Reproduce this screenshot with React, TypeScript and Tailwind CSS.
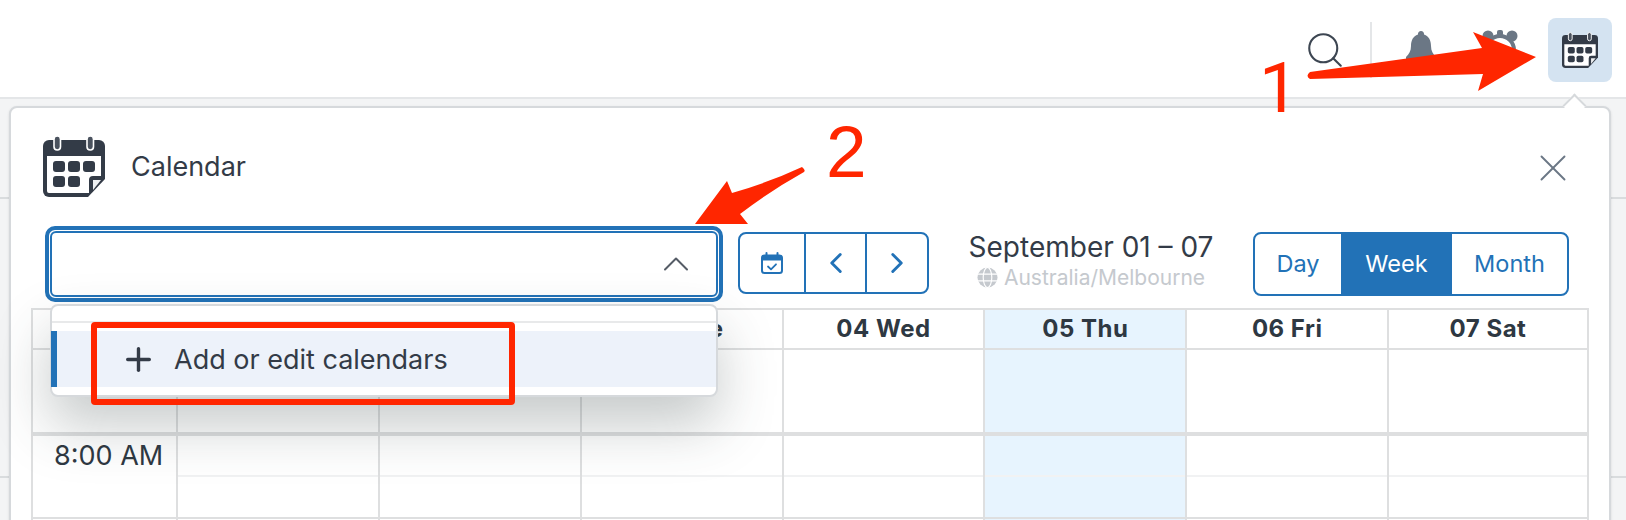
import React from "react";
import { Plus, X, ChevronUp, ChevronLeft, ChevronRight, Search } from "lucide-react";

const BLUE = "#2272b7";

function CalendarIcon({ className }: { className?: string }) {
  return (
    <svg viewBox="0 0 62 62" className={className}>
      <path d="M6 5H56a6 6 0 0 1 6 6V44L45 62H6a6 6 0 0 1-6-6V11a6 6 0 0 1 6-6z" fill="#333b47" />
      <path d="M4 21H58V41H50a4 4 0 0 0-4 4V58H6a2 2 0 0 1-2-2z" fill="#fff" />
      <path d="M50 45H58L50 55z" fill="#eef0f2" />
      <rect x="11" y="1" width="6.5" height="14" rx="3.2" fill="#4a525e" stroke="#fff" strokeWidth="1.6" />
      <rect x="44" y="1" width="6.5" height="14" rx="3.2" fill="#4a525e" stroke="#fff" strokeWidth="1.6" />
      <rect x="10" y="26" width="12" height="11" rx="3" fill="#333b47" />
      <rect x="25" y="26" width="12" height="11" rx="3" fill="#333b47" />
      <rect x="40" y="26" width="12" height="11" rx="3" fill="#333b47" />
      <rect x="10" y="41" width="12" height="11" rx="3" fill="#333b47" />
      <rect x="25" y="41" width="12" height="11" rx="3" fill="#333b47" />
    </svg>
  );
}

function SmallCalendarCheck() {
  return (
    <svg viewBox="0 0 22 22" className="w-[22px] h-[22px]" fill="none">
      <rect x="1" y="3.5" width="20" height="17.5" rx="2.5" stroke={BLUE} strokeWidth="2" />
      <path d="M1 3.5h20v5H1z" fill={BLUE} />
      <path d="M5.5 1v4M16.5 1v4" stroke={BLUE} strokeWidth="2" strokeLinecap="round" />
      <path d="M7 14.5l3 2.8 5-5" stroke={BLUE} strokeWidth="1.8" strokeLinecap="round" strokeLinejoin="round" />
    </svg>
  );
}

function GlobeFilled() {
  return (
    <svg viewBox="0 0 22 22" className="w-[21px] h-[21px]">
      <circle cx="11" cy="11" r="10.500" fill="#c5c9ce" />
      <ellipse cx="11" cy="11" rx="4.500" ry="10.500" fill="none" stroke="#fff" strokeWidth="1.200" />
      <path d="M1 7.500h20M1 14.500h20" stroke="#fff" strokeWidth="1.200" />
    </svg>
  );
}

function BellIcon() {
  return (
    <svg viewBox="0 0 30 32" className="w-[30px] h-[32px]">
      <path d="M15 0a3 3 0 0 1 3 3.400C23 5 25 9.500 25 15c0 5 2 8 5 11v3H0v-3c3-3 5-6 5-11C5 9.500 7 5 12 3.400A3 3 0 0 1 15 0z" fill="#6b7785" />
    </svg>
  );
}

function AlarmIcon() {
  return (
    <svg viewBox="0 0 36 34" className="w-[36px] h-[34px]">
      <circle cx="6" cy="6" r="5.500" fill="#6b7785" />
      <circle cx="30" cy="6" r="5.500" fill="#6b7785" />
      <rect x="15" y="0" width="6" height="6" rx="2" fill="#6b7785" />
      <circle cx="18" cy="20" r="14" fill="none" stroke="#6b7785" strokeWidth="4" />
    </svg>
  );
}

const days = ["01 Sun", "02 Mon", "03 Tue", "04 Wed", "05 Thu", "06 Fri", "07 Sat"];
const TODAY = "05 Thu";

function HourRow({ label }: { label?: string }) {
  return (
    <>
      <div className="h-[81px] border-l-2 border-[#dedfe0] text-[27px] leading-none text-[#2e3842] pl-[21px] pt-[6px] whitespace-nowrap">
        {label}
      </div>
      {days.map((d) => (
        <div
          key={d}
          className={`h-[81px] border-l-2 border-[#dedfe0] ${d === "07 Sat" ? "border-r-2" : ""} ${d === TODAY ? "bg-[#e7f4fe]" : "bg-white"}`}
        >
          <div className="h-[41px] border-b-2 border-[#f1f2f3]" />
        </div>
      ))}
    </>
  );
}

export default function App() {
  return (
    <div className="relative w-[1626px] h-[520px] overflow-hidden bg-[#f3f4f5]" style={{ fontFamily: "Inter, 'Noto Sans', sans-serif" }}>
      {/* page rows behind the panel */}
      <div className="absolute left-0 right-0 top-[197px] h-[2px] bg-[#d9dcde]" />
      <div className="absolute left-0 right-0 top-[476px] h-[2px] bg-[#d9dcde]" />

      {/* top bar */}
      <header className="relative h-[99px] bg-white border-b-2 border-[#e4e6e8] flex items-start justify-end pr-[14px] pt-[18px]">
        <div className="flex items-center h-[64px]">
          <Search className="w-[42px] h-[42px] text-[#3d4652] mr-[24px]" strokeWidth={1.2} />
          <div className="w-[2px] h-[56px] bg-[#e4e6e8] mr-[34px]" />
          <div className="mr-[46px] -mt-[6px]"><BellIcon /></div>
          <div className="mr-[30px] -mt-[6px]"><AlarmIcon /></div>
          <div className="w-[64px] h-[64px] rounded-lg bg-[#d4e3f1] flex items-center justify-center">
            <CalendarIcon className="w-[36px] h-[36px]" />
          </div>
        </div>
      </header>

      {/* calendar panel */}
      <main className="relative ml-[9px] mr-[15px] mt-[7px] h-[420px] bg-white border-2 border-[#d6d9dc] rounded-t-lg pt-[27px] shadow-sm">
        <div className="absolute right-[26px] -top-[11px] w-[17px] h-[17px] rotate-45 bg-white border-l-2 border-t-2 border-[#d6d9dc]" />

        <div className="flex items-center justify-between pl-[32px] pr-[33px] h-[62px]">
          <div className="flex items-center gap-[26px]">
            <CalendarIcon className="w-[62px] h-[62px]" />
            <span className="text-[27px] leading-none text-[#333b47]">Calendar</span>
          </div>
          <X className="w-[46px] h-[46px] text-[#6b7785] mt-[4px]" strokeWidth={1} />
        </div>

        <div className="flex items-center mt-[29px] pl-[34px]">
          <div className="relative w-[678px] h-[76px] shrink-0 rounded-[10px] border-[4px] border-[#2272b7] p-[1px]">
            <div className="h-full rounded-[6px] border-2 border-[#2272b7] flex items-center justify-end pr-[18px]">
              <ChevronUp className="w-[44px] h-[44px] text-[#555c66]" strokeWidth={1.1} />
            </div>
            {/* open dropdown */}
            <div className="absolute z-10 left-[1px] top-[74px] w-[668px] h-[93px] bg-white border-2 border-[#d6d9dc] rounded-lg shadow-[0_28px_56px_rgba(50,65,65,0.28)]">
              <div className="h-[17px] border-b-2 border-[#e8e9ea]" />
              <div className="-ml-[1px] mt-[8px] h-[56px] bg-[#edf2fa] border-l-[6px] border-[#2272b7] flex items-center pl-[63px] gap-[17px]">
                <Plus className="w-[37px] h-[37px] text-[#333b47]" strokeWidth={2.200} />
                <span className="text-[27px] leading-none text-[#333b47] whitespace-nowrap">Add or edit calendars</span>
              </div>
            </div>
          </div>

          <div className="ml-[15px] w-[191px] h-[62px] -mt-[2px] shrink-0 flex border-2 border-[#2272b7] rounded-lg">
            <div className="w-[66px] flex items-center justify-center border-r-2 border-[#2272b7]"><SmallCalendarCheck /></div>
            <div className="w-[61px] flex items-center justify-center border-r-2 border-[#2272b7]">
              <ChevronLeft className="w-[34px] h-[34px] text-[#2272b7]" strokeWidth={2} />
            </div>
            <div className="flex-1 flex items-center justify-center">
              <ChevronRight className="w-[34px] h-[34px] text-[#2272b7]" strokeWidth={2} />
            </div>
          </div>

          <div className="w-[324px] shrink-0 flex flex-col items-center -mt-[8px]">
            <span className="text-[28px] leading-[32px] text-[#333b47] whitespace-nowrap">September 01 – 07</span>
            <span className="mt-[3px] flex items-center gap-[6px] text-[21px] leading-[24px] text-[#c5c9ce] whitespace-nowrap">
              <GlobeFilled />
              Australia/Melbourne
            </span>
          </div>

          <div className="w-[316px] h-[64px] shrink-0 flex border-2 border-[#2272b7] rounded-lg overflow-hidden text-[23.500px] text-[#2272b7]">
            <div className="w-[86px] flex items-center justify-center">Day</div>
            <div className="w-[111px] flex items-center justify-center bg-[#2272b7] text-white">Week</div>
            <div className="flex-1 flex items-center justify-center">Month</div>
          </div>
        </div>

        {/* week grid */}
        <div className="mt-[6px] ml-[20px] w-[1558px] grid grid-cols-[145px_repeat(7,201.857px)] border-t-2 border-[#dedfe0]">
          <div className="h-[40px] border-l-2 border-b-2 border-[#dedfe0]" />
          {days.map((d) => (
            <div
              key={d}
              className={`h-[40px] border-l-2 border-b-2 border-[#dedfe0] ${d === "07 Sat" ? "border-r-2" : ""} ${d === TODAY ? "bg-[#e7f4fe]" : "bg-white"} flex items-center justify-center text-[24px] font-bold tracking-[0.5px] text-[#2e3842]`}
            >
              {d}
            </div>
          ))}

          <div className="h-[86px] border-l-2 border-b-4 border-[#dedfe0]" />
          {days.map((d) => (
            <div
              key={d}
              className={`h-[86px] border-l-2 border-b-4 border-[#dedfe0] ${d === "07 Sat" ? "border-r-2" : ""} ${d === TODAY ? "bg-[#e7f4fe]" : "bg-white"}`}
            />
          ))}

          <HourRow label="8:00 AM" />
          <div className="col-span-8 h-[2px] bg-[#dedfe0]" />
          <HourRow />
        </div>
      </main>

      {/* annotations */}
      <svg className="absolute inset-0 z-20 pointer-events-none" width="1626" height="520">
        <path d="M1310 72 L1482 48 L1473 32 L1536 57 L1478 91 L1483 74 L1310 79 Q1305 76 1310 72z" fill="#ff2600" />
        <path d="M802 167 Q806 170 804 172 Q770 191 740 214 L748 224 L695 224 L727 181 L732 193 Q770 182 802 167z" fill="#ff2600" />
      </svg>
      <div className="absolute z-20 left-[91px] top-[322px] w-[424px] h-[83px] border-[6px] border-[#ff2600] rounded-sm" />
      <span className="absolute z-20 left-[1259px] top-[48px] text-[71px] leading-[80px] text-[#ff2600]" style={{ fontFamily: "Roboto, sans-serif" }}>1</span>
      <span className="absolute z-20 left-[826px] top-[112px] text-[73px] leading-[80px] text-[#ff2600]" style={{ fontFamily: "'Liberation Sans', sans-serif" }}>2</span>
    </div>
  );
}
